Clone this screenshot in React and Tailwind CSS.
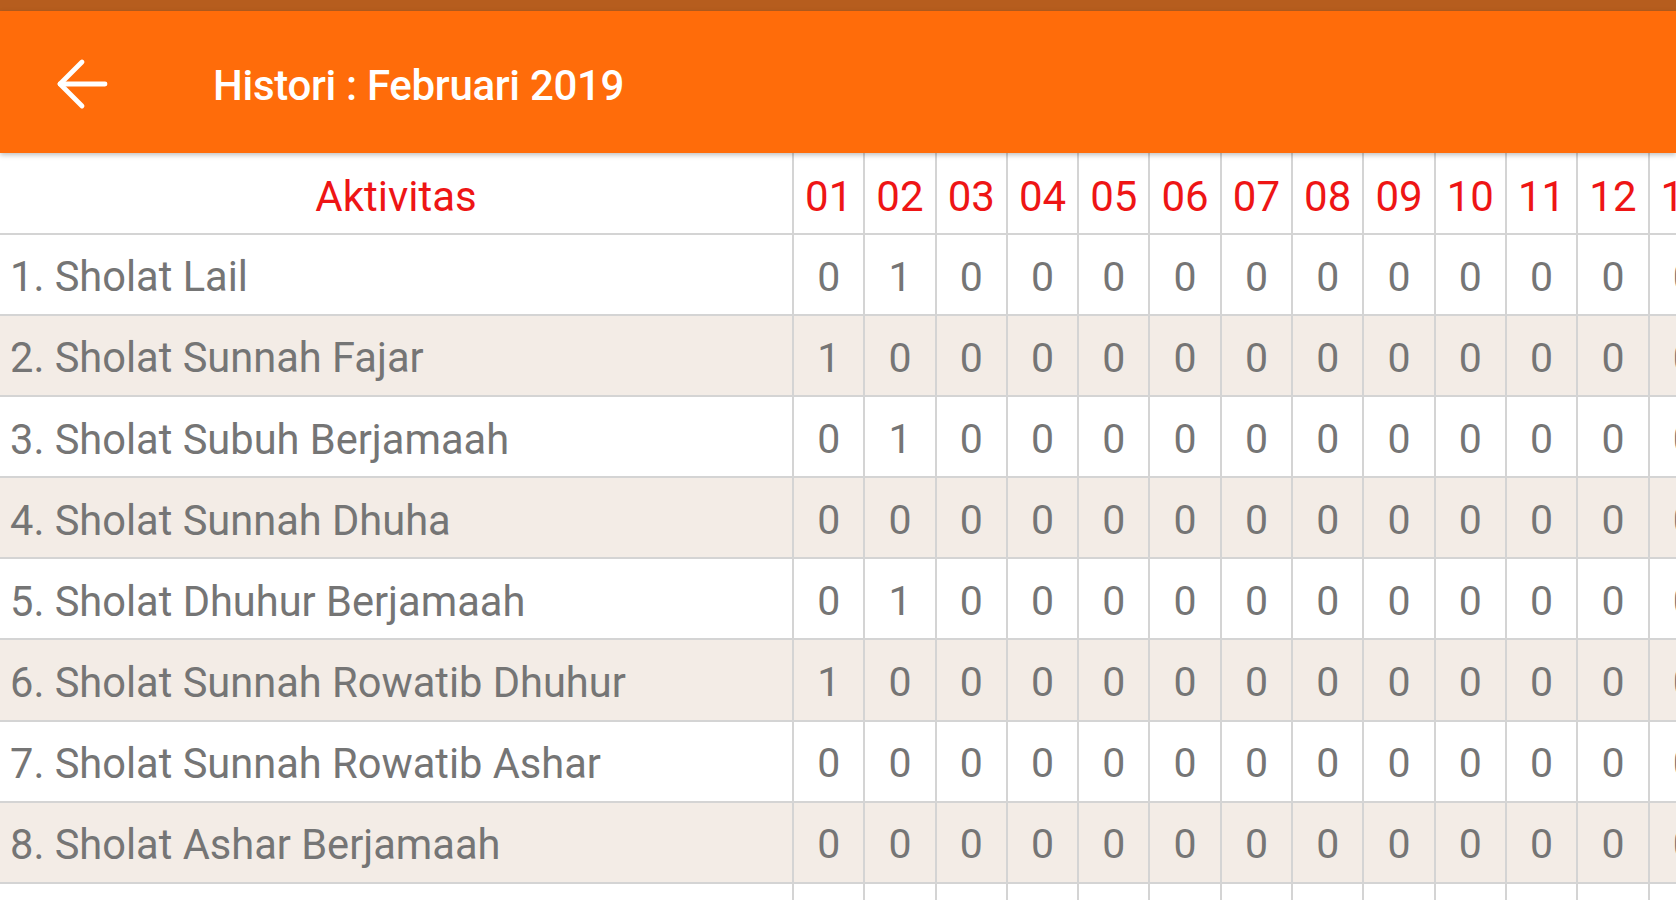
import React from "react";

const days = ["01","02","03","04","05","06","07","08","09","10","11","12","13"];

const rows = [
  { label: "1. Sholat Lail", v: [0,1,0,0,0,0,0,0,0,0,0,0,0] },
  { label: "2. Sholat Sunnah Fajar", v: [1,0,0,0,0,0,0,0,0,0,0,0,0] },
  { label: "3. Sholat Subuh Berjamaah", v: [0,1,0,0,0,0,0,0,0,0,0,0,0] },
  { label: "4. Sholat Sunnah Dhuha", v: [0,0,0,0,0,0,0,0,0,0,0,0,0] },
  { label: "5. Sholat Dhuhur Berjamaah", v: [0,1,0,0,0,0,0,0,0,0,0,0,0] },
  { label: "6. Sholat Sunnah Rowatib Dhuhur", v: [1,0,0,0,0,0,0,0,0,0,0,0,0] },
  { label: "7. Sholat Sunnah Rowatib Ashar", v: [0,0,0,0,0,0,0,0,0,0,0,0,0] },
  { label: "8. Sholat Ashar Berjamaah", v: [0,0,0,0,0,0,0,0,0,0,0,0,0] },
  { label: "", v: ["","","","","","","","","","","","",""] },
];

export default function App() {
  return (
    <div className="w-[1676px] h-[900px] overflow-hidden bg-white font-[Roboto,sans-serif]">
      <div className="h-[11px] bg-[#b65d1e]" />
      <div className="relative z-10 h-[142px] bg-[#ff6c0a] flex items-center shadow-[0_2px_5px_rgba(0,0,0,0.25)]">
        <svg className="ml-[56px] mt-[4px] w-[52px] h-[52px]" viewBox="0 0 52 52" fill="none" stroke="white" strokeWidth="4.8" strokeLinecap="round" strokeLinejoin="round">
          <path d="M49 26H4" />
          <path d="M26 4L4 26l22 22" />
        </svg>
        <span className="ml-[105px] mt-[8px] text-white text-[42px] font-medium tracking-[-0.3px] leading-none">Histori : Februari 2019</span>
      </div>
      <div className="overflow-hidden">
        <div className="grid grid-cols-[792px_repeat(13,71.3px)] h-[82px] border-b-2 border-[#d4d4d4] bg-white">
          <div className="flex items-center justify-center pt-[6px] text-[42px] text-[#ee1515]">Aktivitas</div>
          {days.map((d) => (
            <div key={d} className="flex items-center justify-center pt-[6px] border-l-2 border-[#d4d4d4] text-[42px] text-[#ee1515]">{d}</div>
          ))}
        </div>
        {rows.map((r, i) => (
          <div
            key={i}
            className={`grid grid-cols-[792px_repeat(13,71.3px)] h-[81.1px] border-b-2 border-[#d4d4d4] ${i % 2 === 1 ? "bg-[#f3ece6]" : "bg-white"}`}
          >
            <div className="flex items-center pl-[10px] pt-[6px] text-[41.6px] text-[#757575] whitespace-nowrap">{r.label}</div>
            {r.v.map((x, j) => (
              <div key={j} className="flex items-center justify-center pt-[6px] border-l-2 border-[#d4d4d4] text-[41px] text-[#757575]">{x}</div>
            ))}
          </div>
        ))}
      </div>
    </div>
  );
}
